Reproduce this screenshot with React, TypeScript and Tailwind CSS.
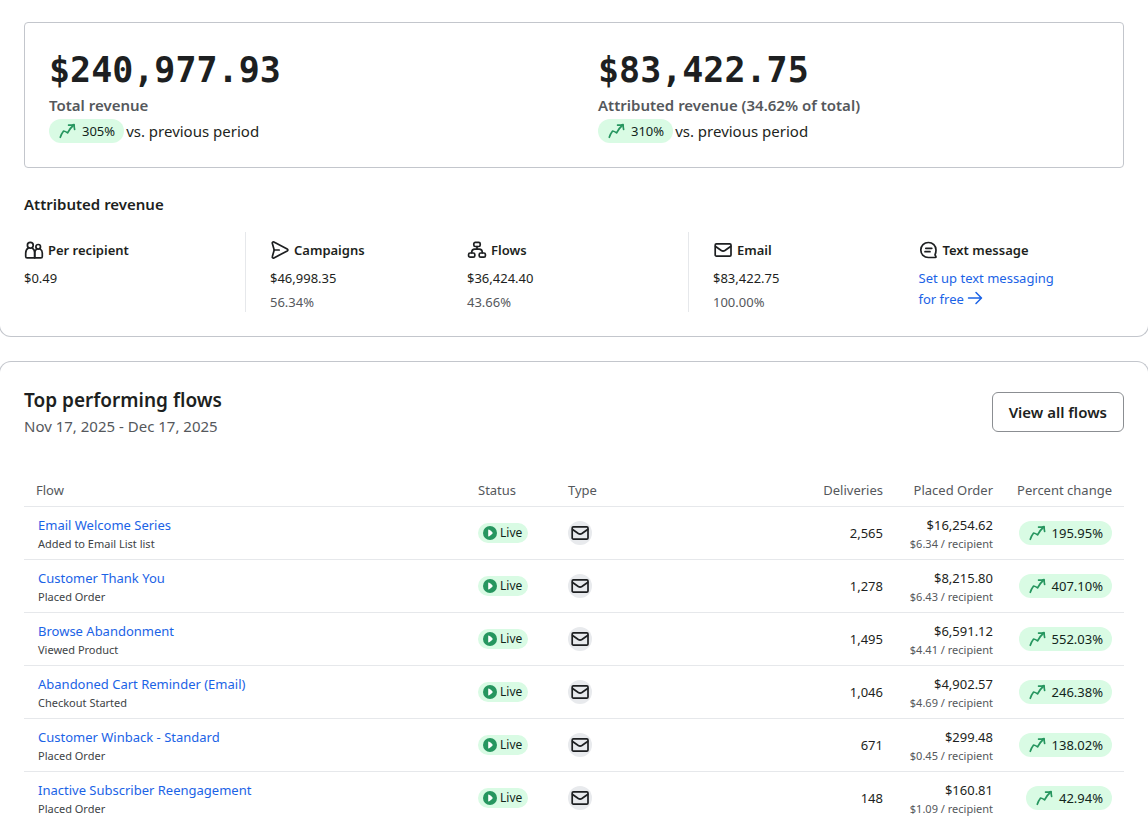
import type { ReactNode } from "react";

type IconProps = { className?: string };

const Icon = ({ className = "", children }: IconProps & { children: ReactNode }) => (
  <svg
    viewBox="0 0 20 20"
    fill="none"
    stroke="currentColor"
    strokeWidth="1.7"
    strokeLinecap="round"
    strokeLinejoin="round"
    aria-hidden="true"
    className={`size-5 shrink-0 ${className}`}
  >
    {children}
  </svg>
);

const PeopleIcon = () => (
  <Icon>
    <circle cx="6.3" cy="5.2" r="2.9" />
    <circle cx="14.2" cy="6.8" r="2.3" />
    <path d="M4.3 8C2.5 9.2 1.7 11 1.7 13.2v3.2c0 .9.5 1.4 1.400 1.400h7.600V13c0-2-.8-3.900-2.400-5" />
    <path d="M12.800 9c-1.400.8-2.100 2.200-2.100 4v4.800h6.200c.9 0 1.400-.5 1.400-1.400V13c0-1.700-.7-3.200-2.200-4" />
  </Icon>
);

const SendIcon = () => (
  <Icon>
    <path d="M2.3 3.3c-.3-1 .7-1.7 1.600-1.300l13.300 7c.9.5.9 1.500 0 2l-13.300 6.900c-.9.5-1.900-.3-1.600-1.200L4.200 10 2.3 3.300Z" />
    <path d="M4.2 10h5" />
  </Icon>
);

const FlowIcon = () => (
  <Icon>
    <rect x="6.800" y="2.300" width="6.400" height="4.200" rx="1.500" />
    <rect x="1.600" y="13" width="6.200" height="4.200" rx="1.500" />
    <rect x="12.200" y="13" width="6.200" height="4.200" rx="1.500" />
    <path d="M10 6.500v2.700M4.700 12.800c0-2.500 1.200-3.600 3.200-3.600h4.200c2 0 3.200 1.100 3.200 3.600" />
  </Icon>
);

const MailIcon = () => (
  <Icon>
    <rect x="2.200" y="3.900" width="15.800" height="12.200" rx="1.200" />
    <path d="M2.600 6.500l5.700 4c1.200.8 2.400.8 3.600 0l5.700-4" />
  </Icon>
);

const MessageIcon = () => (
  <Icon>
    <path d="M17 10c0-4.200-3.300-7.500-7.600-7.500S1.800 5.800 1.800 10s3.300 7.500 7.600 7.500h7c.6 0 .8-.5.5-1l-.9-1.600c.7-1.400 1-3 1-4.900Z" />
    <path d="M6.800 8.300h6M6 11.700h5" />
  </Icon>
);

const ArrowIcon = () => (
  <svg
    viewBox="0 0 16 16"
    fill="none"
    stroke="currentColor"
    strokeWidth="1.5"
    strokeLinecap="round"
    strokeLinejoin="round"
    aria-hidden="true"
    className="inline size-4 align-[-2px]"
  >
    <path d="M1.500 8h12.800M9 2.500 14.500 8 9 13.500" />
  </svg>
);

const TrendIcon = () => (
  <Icon className="text-[#26965f]">
    <path d="M2.300 16.300c.7-2.300 1.700-4.300 3.300-6.300 1.400.2 2.600.8 4 1.900C11 8.900 12.900 6.400 15.700 4" />
    <path d="M10.600 4.100c1.900.1 3.700-.1 5.500-.5 0 1.700.1 3.200.5 4.800" />
  </Icon>
);

const PlayIcon = () => (
  <svg viewBox="0 0 14 14" aria-hidden="true" className="size-3.5 shrink-0">
    <circle cx="7" cy="7" r="7" fill="#26965f" />
    <path d="M5.200 3.900v6.200c0 .4.400.6.700.4 1.400-.8 2.900-1.900 3.600-2.900.3-.4.3-.8 0-1.200-.7-1-2.200-2.100-3.600-2.900-.3-.2-.7 0-.7.400Z" fill="#fff" />
  </svg>
);

const TrendBadge = ({ value }: { value: string }) => (
  <span className="inline-flex h-6 items-center gap-1 rounded-full bg-[#d9fbe4] px-[9px] text-[13px] text-[#12251b]">
    <TrendIcon />
    {value}
  </span>
);

const totals = [
  { amount: "$240,977.93", label: "Total revenue", change: "305%" },
  { amount: "$83,422.75", label: "Attributed revenue (34.62% of total)", change: "310%" },
];

const flows = [
  { name: "Email Welcome Series", trigger: "Added to Email List list", deliveries: "2,565", revenue: "$16,254.62", each: "$6.34", change: "195.95%" },
  { name: "Customer Thank You", trigger: "Placed Order", deliveries: "1,278", revenue: "$8,215.80", each: "$6.43", change: "407.10%" },
  { name: "Browse Abandonment", trigger: "Viewed Product", deliveries: "1,495", revenue: "$6,591.12", each: "$4.41", change: "552.03%" },
  { name: "Abandoned Cart Reminder (Email)", trigger: "Checkout Started", deliveries: "1,046", revenue: "$4,902.57", each: "$4.69", change: "246.38%" },
  { name: "Customer Winback - Standard", trigger: "Placed Order", deliveries: "671", revenue: "$299.48", each: "$0.45", change: "138.02%" },
  { name: "Inactive Subscriber Reengagement", trigger: "Placed Order", deliveries: "148", revenue: "$160.81", each: "$1.09", change: "42.94%" },
];

const Metric = ({ icon, label, children }: { icon: ReactNode; label: string; children: ReactNode }) => (
  <div className="pt-2">
    <h3 className="flex items-center gap-1 text-[13px] leading-5 font-semibold">
      {icon}
      {label}
    </h3>
    <div className="mt-2 text-[13px] leading-5">{children}</div>
  </div>
);

const Amount = ({ value, share }: { value: string; share?: string }) => (
  <>
    <p>{value}</p>
    {share && <p className="mt-1 text-[#55585c]">{share}</p>}
  </>
);

export default function App() {
  return (
    <main className="h-screen overflow-hidden bg-white font-['Noto_Sans',sans-serif] text-[#1d1f21]">
      <section className="-mx-px rounded-b-xl border border-t-0 border-[#c3c6cc] px-6 pt-[22px] pb-6">
        <div className="grid grid-cols-2 rounded border border-[#c3c6cc]">
          {totals.map((t) => (
            <div key={t.label} className="p-6">
              <p className="font-['DejaVu_Sans_Mono',monospace] text-[35px] leading-[46px] font-bold">{t.amount}</p>
              <p className="text-[15px] leading-6 font-semibold text-[#55585c]">{t.label}</p>
              <div className="mt-0.5 flex items-center gap-0.5 text-[15px] leading-6">
                <TrendBadge value={t.change} />
                vs. previous period
              </div>
            </div>
          ))}
        </div>

        <h2 className="mt-6 text-[15px] leading-6 font-semibold">Attributed revenue</h2>
        <div className="mt-4 grid grid-cols-[222fr_443fr_435fr] divide-x divide-[#e6e8eb]">
          <Metric icon={<PeopleIcon />} label="Per recipient">
            <Amount value="$0.49" />
          </Metric>
          <div className="grid grid-cols-2 px-6">
            <Metric icon={<SendIcon />} label="Campaigns">
              <Amount value="$46,998.35" share="56.34%" />
            </Metric>
            <Metric icon={<FlowIcon />} label="Flows">
              <Amount value="$36,424.40" share="43.66%" />
            </Metric>
          </div>
          <div className="grid grid-cols-2 pl-6">
            <Metric icon={<MailIcon />} label="Email">
              <Amount value="$83,422.75" share="100.00%" />
            </Metric>
            <Metric icon={<MessageIcon />} label="Text message">
              <a href="#sms" className="block leading-[21px] text-[#1b63e6]">
                Set up text messaging
                <br />
                for free <ArrowIcon />
              </a>
            </Metric>
          </div>
        </div>
      </section>

      <section className="-mx-px mt-6 rounded-t-xl border border-b-0 border-[#c3c6cc] px-6 pt-6">
        <div className="flex items-center justify-between">
          <div>
            <h2 className="text-[19px] leading-7 font-semibold">Top performing flows</h2>
            <p className="text-[15px] leading-6 text-[#55585c]">Nov 17, 2025 - Dec 17, 2025</p>
          </div>
          <button type="button" className="h-10 rounded-md border border-[#8b8e92] px-4 text-[15px] font-semibold">
            View all flows
          </button>
        </div>

        <table className="mt-9 w-full table-fixed text-[13px] leading-5">
          <thead>
            <tr className="border-b border-[#e6e8eb] text-left text-[#55585c] *:px-3 *:py-1.5 *:font-normal">
              <th scope="col">Flow</th>
              <th scope="col" className="w-[90px]">Status</th>
              <th scope="col" className="w-[22%]">Type</th>
              <th scope="col" className="w-[97px] text-right">Deliveries</th>
              <th scope="col" className="w-[110px] text-right">Placed Order</th>
              <th scope="col" className="w-[119px] text-right whitespace-nowrap">Percent change</th>
            </tr>
          </thead>
          <tbody>
            {flows.map((f) => (
              <tr key={f.name} className="border-b border-[#e6e8eb] *:px-3">
                <td className="pt-2 pb-1.5">
                  <div className="pl-0.5">
                    <a href="#flow" className="block text-[#1b63e6]">{f.name}</a>
                    <span className="block text-[11px] leading-[18px] text-[#404346]">{f.trigger}</span>
                  </div>
                </td>
                <td>
                  <span className="flex h-5 w-fit items-center gap-[3px] rounded-full bg-[#d9fbe4] pr-1.5 pl-[5px] text-xs text-[#12251b]">
                    <PlayIcon />
                    Live
                  </span>
                </td>
                <td>
                  <span className="flex size-6 items-center justify-center rounded-full bg-[#e8eaed]">
                    <MailIcon />
                  </span>
                </td>
                <td className="text-right">{f.deliveries}</td>
                <td className="pt-2 pb-1.5 text-right">
                  <span className="block">{f.revenue}</span>
                  <span className="block text-[11px] leading-[18px] whitespace-nowrap text-[#55585c]">{f.each} / recipient</span>
                </td>
                <td>
                  <div className="flex justify-end">
                    <TrendBadge value={f.change} />
                  </div>
                </td>
              </tr>
            ))}
          </tbody>
        </table>
      </section>
    </main>
  );
}
